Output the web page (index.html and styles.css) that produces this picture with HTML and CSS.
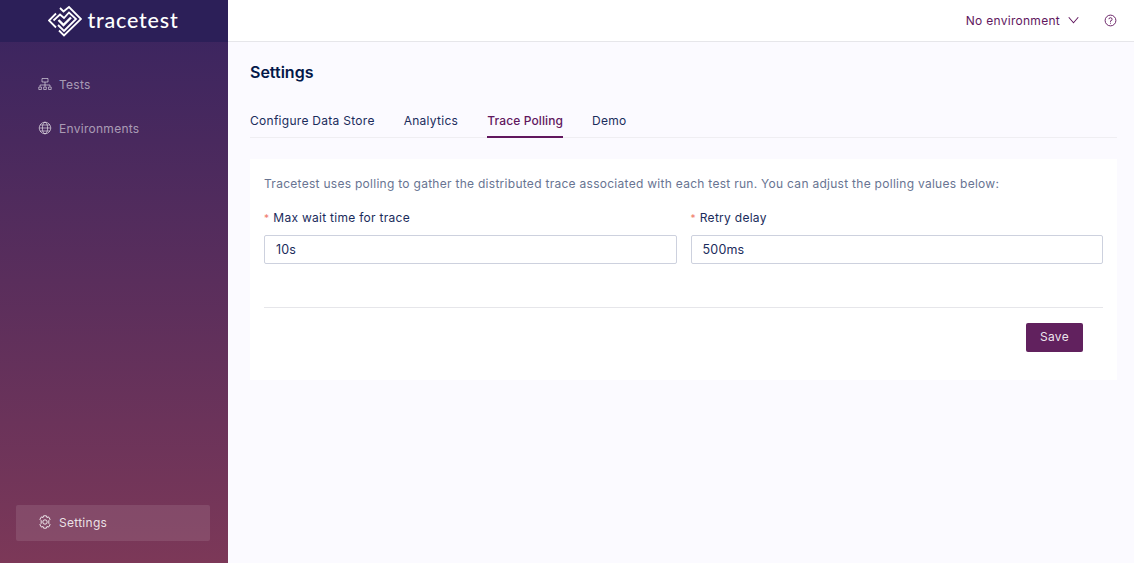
FILE: index.html
```html
<!DOCTYPE html>
<html lang="en">
<head>
<meta charset="utf-8">
<title>Tracetest Settings</title>
<link rel="stylesheet" href="styles.css">
</head>
<body>
<div class="app">
  <aside class="sidebar">
    <div class="brand">
      <svg class="logo" viewBox="0 0 34 32" fill="none" stroke="#fff" stroke-width="1.800">
        <path d="M12 3 L15.500 6.500 L21 2 L33 14 L16 30.500 L11 25.500 M8 22.500 L1 15.500 L8 8.500"/>
        <path d="M5.500 15.500 L12 9.500 L16 13 L21 7.500 L28 14 L16 26 L10 20"/>
        <path d="M10.500 15 L15.500 20 L23 12.500" stroke-width="2.400"/>
      </svg>
      <span class="brand-name">tracetest</span>
    </div>
    <nav class="nav">
      <a class="nav-item">
        <svg class="nav-icon" viewBox="0 0 14 14" fill="none" stroke="currentColor" stroke-width="1">
          <path d="M4 1.500h6v3.500H4zM7 5v3M2 8h10M2 8v1.500M7 8v1.500M12 8v1.500M.8 10h2.600v2.500H.8zM5.700 10h2.600v2.500H5.700zM10.600 10h2.600v2.500h-2.600z"/>
        </svg>
        <span>Tests</span>
      </a>
      <a class="nav-item">
        <svg class="nav-icon" viewBox="0 0 14 14" fill="none" stroke="currentColor" stroke-width="1">
          <circle cx="7" cy="7" r="5.800"/>
          <ellipse cx="7" cy="7" rx="2.600" ry="5.800"/>
          <path d="M1.200 7h11.600M2 4h10M2 10h10"/>
        </svg>
        <span>Environments</span>
      </a>
    </nav>
    <a class="nav-item nav-item-active">
      <svg class="nav-icon" viewBox="0 0 14 14" fill="none" stroke="currentColor" stroke-width="1">
        <circle cx="7" cy="7" r="2.200"/>
        <path d="M5.600.8h2.800l.5 1.700 1.700-.6 1.500 2.400-1.300 1.300v2.800l1.300 1.300-1.500 2.400-1.700-.6-.5 1.700H5.600l-.5-1.700-1.700.6-1.500-2.400 1.300-1.300V5.600L1.900 4.300l1.500-2.400 1.700.6z"/>
      </svg>
      <span>Settings</span>
    </a>
  </aside>
  <div class="content">
    <header class="topbar">
      <span class="env">No environment</span>
      <svg class="chevron" viewBox="0 0 12 8" fill="none" stroke="currentColor" stroke-width="1.100"><path d="M.8 1 6 7l5.200-6"/></svg>
      <svg class="help" viewBox="0 0 14 14" fill="none" stroke="currentColor" stroke-width="1">
        <circle cx="7" cy="7" r="5.800"/>
        <path d="M5.300 5.600A1.700 1.700 0 1 1 7 7.400v1"/>
        <path d="M7 9.400v1"/>
      </svg>
    </header>
    <main class="main">
      <h1 class="title">Settings</h1>
      <div class="tabs">
        <span class="tab">Configure Data Store</span>
        <span class="tab">Analytics</span>
        <span class="tab tab-active">Trace Polling</span>
        <span class="tab">Demo</span>
      </div>
      <section class="card">
        <p class="desc">Tracetest uses polling to gather the distributed trace associated with each test run. You can adjust the polling values below:</p>
        <div class="fields">
          <div class="field">
            <label class="label"><span class="req">*</span>Max wait time for trace</label>
            <input class="input" value="10s">
          </div>
          <div class="field">
            <label class="label"><span class="req">*</span>Retry delay</label>
            <input class="input" value="500ms">
          </div>
        </div>
        <div class="actions">
          <button class="save">Save</button>
        </div>
      </section>
    </main>
  </div>
</div>
</body>
</html>
```
FILE: styles.css
```css
* { box-sizing: border-box; }
html, body { margin: 0; height: 100%; overflow: hidden; }
body { font-family: Inter, "Liberation Sans", sans-serif; font-size: 12px; letter-spacing: .28px; color: #1a2c5c; }
.app { display: flex; height: 563px; }
.sidebar { width: 228px; flex: none; display: flex; flex-direction: column; padding-bottom: 22px; background: linear-gradient(180deg, #382460 0%, #7c3858 100%); }
.brand { height: 42px; flex: none; background: #2c1f58; display: flex; align-items: center; justify-content: center; gap: 5px; padding-right: 1px; }
.logo { width: 34px; height: 32px; }
.brand-name { font-family: Lato, sans-serif; font-size: 21.500px; line-height: 26px; letter-spacing: .8px; color: #fff; font-weight: 500; padding-bottom: 2px; }
.nav { flex: 1; display: flex; flex-direction: column; gap: 8px; padding: 25px 16px 0; }
.nav-item { display: flex; align-items: center; gap: 7px; height: 36px; padding: 0 0 2px 22px; color: rgba(255,255,255,.55); border-radius: 2px; }
.nav-item-active { margin: 0 18px 0 16px; color: rgba(255,255,255,.85); background: rgba(255,255,255,.1); }
.nav-icon { width: 14px; height: 14px; flex: none; }
.content { flex: 1; min-width: 0; display: flex; flex-direction: column; background: #fbfaff; }
.topbar { height: 42px; flex: none; background: #fff; border-bottom: 1px solid #e6e6ea; display: flex; align-items: center; justify-content: flex-end; padding-right: 17px; color: #61175e; }
.env { margin-right: 8px; }
.chevron { width: 11px; height: 8px; margin-right: 25px; margin-top: -2px; }
.help { width: 13px; height: 13px; margin-top: -1px; }
.main { padding: 20px 17px 0 22px; }
.title { margin: 0; font-size: 16px; line-height: 20px; font-weight: 600; letter-spacing: 0; color: #031849; }
.tabs { display: flex; gap: 29px; margin-top: 25px; border-bottom: 1px solid #efeef2; }
.tab { height: 31px; padding-top: 6px; line-height: 16px; margin-bottom: -1px; }
.tab-active { color: #61175e; font-weight: 500; letter-spacing: .12px; border-bottom: 2px solid #61175e; }
.card { margin-top: 21px; height: 221px; padding: 17px 14px 0; background: #fff; }
.desc { margin: 0; line-height: 16px; color: #687492; }
.fields { display: flex; gap: 14px; margin-top: 17px; }
.field { flex: 1; display: flex; flex-direction: column; }
.label { line-height: 16px; height: 26px; padding-top: 1px; }
.req { color: #ef7a6a; margin-right: 4px; font-size: 10px; }
.input { width: 100%; height: 29px; padding: 0 11px; font: inherit; font-size: 12.500px; letter-spacing: .2px; color: #1a2c5c; background: #fff; border: 1px solid #cdd1de; border-radius: 2px; outline: none; }
.actions { display: flex; justify-content: flex-end; margin-top: 43px; padding: 15px 20px 0 0; border-top: 1px solid #e6e6ea; }
.save { width: 57px; height: 29px; padding: 0 0 2px; font: inherit; letter-spacing: inherit; color: rgba(255,255,255,.9); background: #61215e; border: none; border-radius: 2px; }
```
